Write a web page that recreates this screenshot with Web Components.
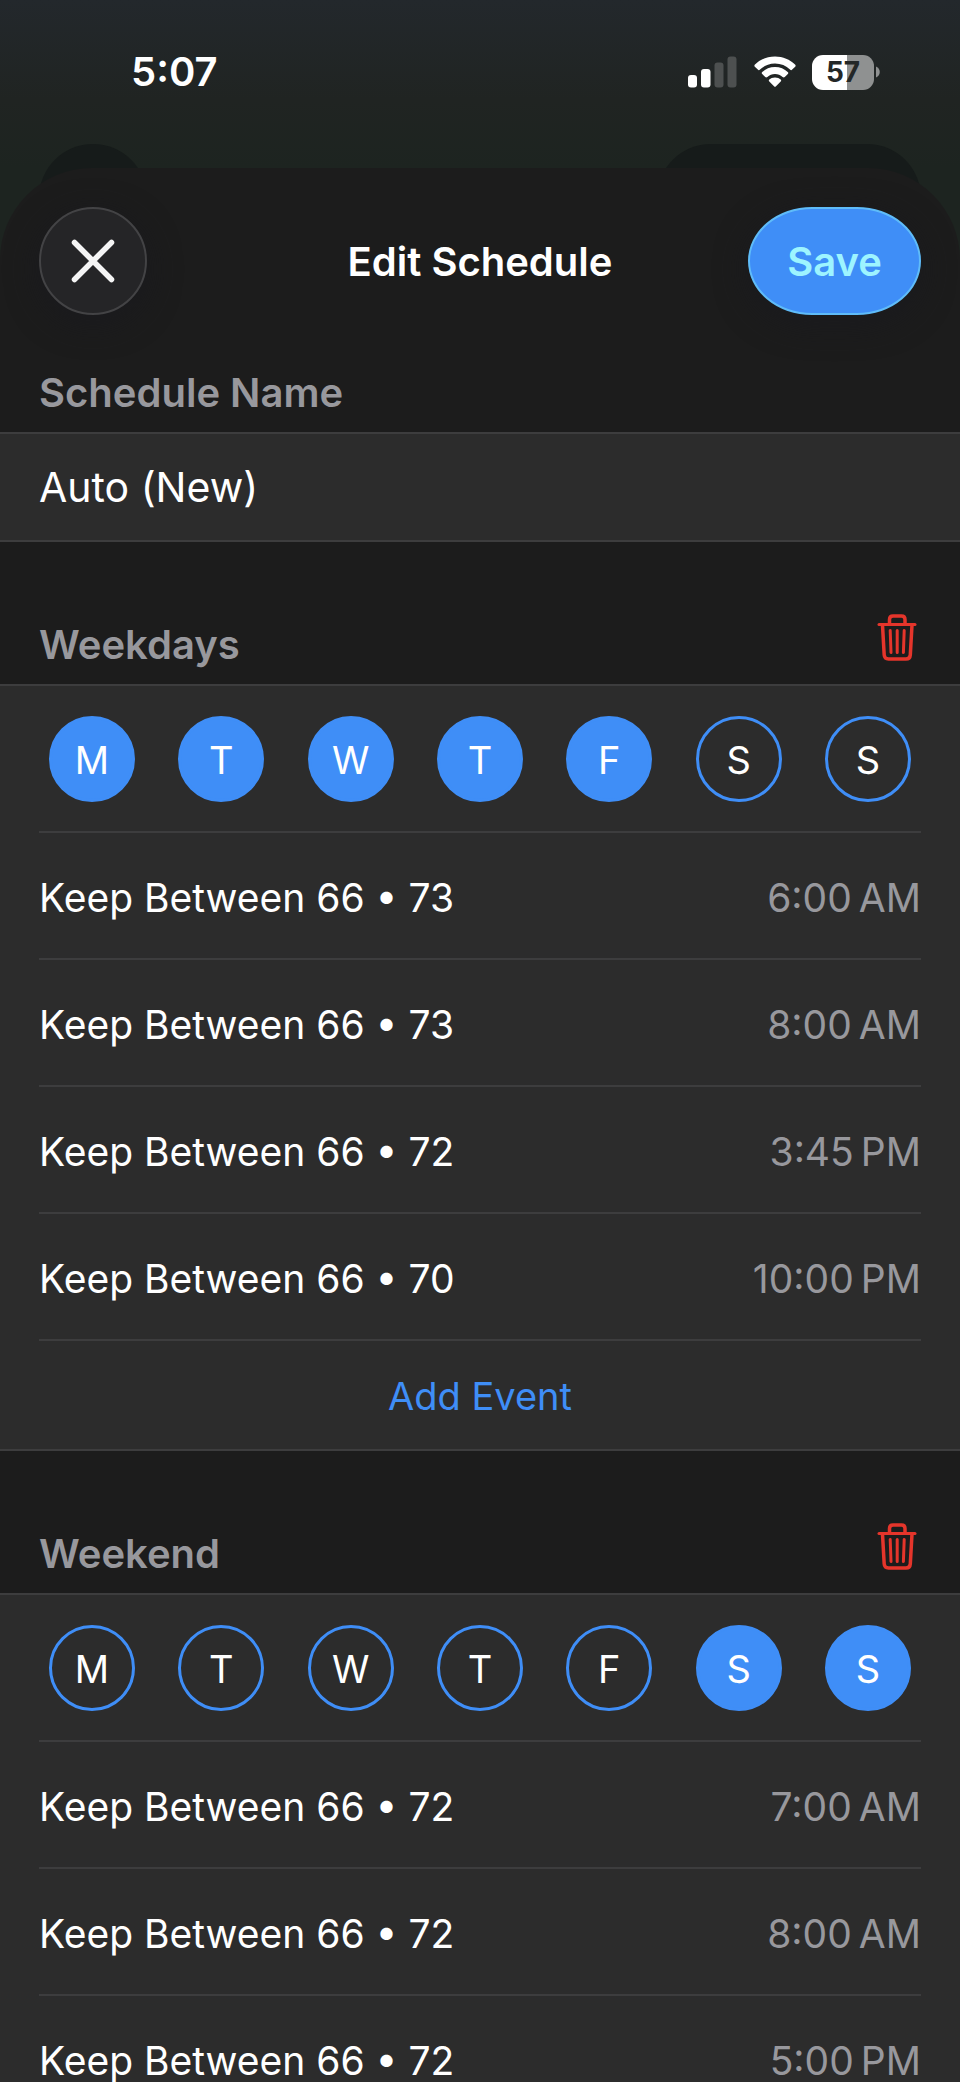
<!DOCTYPE html>
<html lang="en">
<head>
<meta charset="utf-8">
<meta name="viewport" content="width=device-width, initial-scale=1">
<title>Edit Schedule</title>
<style>
    :root {
        --accent: #3f8ef7;
        --sheet: #1c1c1c;
        --card: #2c2c2c;
        --line: #3d3d3e;
        --muted: #98989d;
        --gutter: 39px;
    }

    body {
        margin: 0;
        background: var(--sheet);
        color: #fff;
        font-family: Inter, "Liberation Sans", sans-serif;
        font-size: 40px;
        line-height: 48px;
    }
</style>
</head>
<body>
<schedule-app>
    <status-bar slot="status" time="5:07" battery="57"></status-bar>
    <sheet-header slot="header">Edit Schedule</sheet-header>
    <name-field label="Schedule Name" value="Auto (New)"></name-field>
    <day-group name="Weekdays" days="0,1,2,3,4">
        <event-row time="6:00 AM">Keep Between 66 • 73</event-row>
        <event-row time="8:00 AM">Keep Between 66 • 73</event-row>
        <event-row time="3:45 PM">Keep Between 66 • 72</event-row>
        <event-row time="10:00 PM">Keep Between 66 • 70</event-row>
    </day-group>
    <day-group name="Weekend" days="5,6">
        <event-row time="7:00 AM">Keep Between 66 • 72</event-row>
        <event-row time="8:00 AM">Keep Between 66 • 72</event-row>
        <event-row time="5:00 PM">Keep Between 66 • 72</event-row>
    </day-group>
</schedule-app>

<script>
const resetButton = `
    button {
        margin: 0;
        padding: 0;
        border: 0;
        background: none;
        color: inherit;
        font: inherit;
        cursor: pointer;
    }
`;

class ScheduleApp extends HTMLElement {
    constructor() {
        super();
        this.attachShadow({ mode: 'open' });
        this.shadowRoot.innerHTML = `
            <style>
                :host {
                    display: flex;
                    flex-direction: column;
                    height: 100vh;
                    overflow: hidden;
                    background: linear-gradient(#23282c, #202422 100px, #1d2420 168px, #1d2420);
                }

                /* toolbar of the page underneath, peeking out above the sheet */
                .behind {
                    display: flex;
                    flex: none;
                    justify-content: space-between;
                    height: 24px;
                    padding: 0 var(--gutter);

                    span {
                        width: 108px;
                        height: 108px;
                        border-radius: 54px;
                        background: #161b1a;
                    }

                    span + span {
                        width: 264px;
                    }
                }

                .sheet {
                    position: relative;
                    flex: 1;
                    min-height: 0;
                    overflow-y: auto;
                    scrollbar-width: none;
                    background: var(--sheet);
                    border-radius: 92px 92px 0 0;
                }
            </style>
            <slot name="status"></slot>
            <div class="behind"><span></span><span></span></div>
            <main class="sheet">
                <slot name="header"></slot>
                <slot></slot>
            </main>
        `;
    }
}

class StatusBar extends HTMLElement {
    constructor() {
        super();
        this.attachShadow({ mode: 'open' });
    }

    connectedCallback() {
        const time = this.getAttribute('time') || '';
        const battery = this.getAttribute('battery') || '';

        this.shadowRoot.innerHTML = `
            <style>
                :host {
                    display: flex;
                    flex: none;
                    align-items: center;
                    justify-content: space-between;
                    height: 144px;
                    padding: 0 80px 0 131px;
                    font-weight: 600;
                }

                .icons {
                    display: flex;
                    align-items: center;
                    gap: 16px;
                }

                svg {
                    display: block;
                }

                .battery {
                    display: flex;
                    align-items: center;
                    gap: 2px;
                }

                .level {
                    width: 62px;
                    border-radius: 11px;
                    background: linear-gradient(90deg, #fff ${battery}%, #8f9191 ${battery}%);
                    color: #232727;
                    font-size: 28px;
                    font-weight: 700;
                    line-height: 35px;
                    text-align: center;
                }
            </style>
            <span>${time}</span>
            <div class="icons">
                <svg width="50" height="32" viewBox="0 0 50 32" fill="#fff" aria-hidden="true">
                    <rect x="0" y="19" width="9" height="12.500" rx="3"/>
                    <rect x="13" y="13" width="9.500" height="18.500" rx="3"/>
                    <rect x="26.500" y="6.500" width="9" height="25" rx="3" fill="#4d5050"/>
                    <rect x="39.500" y="0.500" width="9" height="31" rx="3" fill="#4d5050"/>
                </svg>
                <svg width="42" height="32" viewBox="0 0 42 32" fill="#fff" aria-hidden="true">
                    <path d="M21 0.500C29 0.500 36 3.500 41 8.500C41.800 9.300 41.800 10 41.200 10.700L38.200 13.600C37.500 14.300 36.800 14.300 36 13.600C32 9.800 27 7.500 21 7.500C15 7.500 10 9.800 6 13.600C5.200 14.300 4.500 14.300 3.800 13.600L0.800 10.700C0.200 10 0.200 9.300 1 8.500C6 3.500 13 0.500 21 0.500Z"/>
                    <path d="M21 11C26 11 30.500 13 33.700 15.900C34.500 16.700 34.500 17.400 33.800 18.100L30.800 21C30.100 21.700 29.400 21.600 28.600 21C26.500 19.200 24 18 21 18C18 18 15.500 19.200 13.400 21C12.600 21.600 11.900 21.700 11.200 21L8.200 18.100C7.500 17.400 7.500 16.700 8.300 15.900C11.500 13 16 11 21 11Z"/>
                    <path d="M21 21.500C23.500 21.500 25.300 22.300 26.700 23.500C27.400 24.200 27.300 24.800 26.700 25.400L22 30.300C21.300 31 20.700 31 20 30.300L15.300 25.400C14.700 24.800 14.600 24.200 15.300 23.500C16.700 22.300 18.500 21.500 21 21.500Z"/>
                </svg>
                <div class="battery">
                    <div class="level">${battery}</div>
                    <svg width="4" height="12" viewBox="0 0 4 12" fill="#8f9191" aria-hidden="true">
                        <path d="M0 0.500C5 2.500 5 9.500 0 11.500Z"/>
                    </svg>
                </div>
            </div>
        `;
    }
}

class SheetHeader extends HTMLElement {
    constructor() {
        super();
        this.attachShadow({ mode: 'open' });
        this.shadowRoot.innerHTML = `
            <style>
                ${resetButton}

                :host {
                    display: grid;
                    grid-template-columns: 1fr auto 1fr;
                    align-items: center;
                    padding: 39px var(--gutter) 0;
                }

                h1 {
                    margin: 0;
                    padding-top: 2px;
                    font-size: inherit;
                    font-weight: 600;
                }

                .close {
                    display: grid;
                    place-items: center;
                    box-sizing: border-box;
                    width: 108px;
                    height: 108px;
                    border: 2px solid #434345;
                    border-radius: 50%;
                    background: #252527;
                    box-shadow: 0 8px 32px #1a1a1e;
                }

                .save {
                    justify-self: end;
                    box-sizing: border-box;
                    height: 108px;
                    padding: 2px 37px 0;
                    border: 2px solid #5fbcf9;
                    border-radius: 64px / 54px;
                    background: var(--accent);
                    box-shadow: 0 8px 32px #1a1a1e;
                    color: #9df4ff;
                    font-weight: 600;
                }
            </style>
            <button class="close" type="button" aria-label="Close">
                <svg width="44" height="44" viewBox="0 0 44 44" fill="none" stroke="#f5f5f5" stroke-width="5.500" stroke-linecap="round" aria-hidden="true">
                    <path d="M3.500 3.500L40.500 40.500M40.500 3.500L3.500 40.500"/>
                </svg>
            </button>
            <h1><slot></slot></h1>
            <button class="save" type="button">Save</button>
        `;
    }
}

class NameField extends HTMLElement {
    constructor() {
        super();
        this.attachShadow({ mode: 'open' });
    }

    connectedCallback() {
        this.shadowRoot.innerHTML = `
            <style>
                :host {
                    display: block;
                }

                label {
                    display: block;
                    padding: 54px var(--gutter) 15px;
                    color: var(--muted);
                    font-weight: 600;
                }

                input {
                    display: block;
                    box-sizing: border-box;
                    width: 100%;
                    height: 110px;
                    margin: 0;
                    padding: 0 var(--gutter);
                    border: solid var(--line);
                    border-width: 2px 0;
                    border-radius: 0;
                    outline: 0;
                    background: var(--card);
                    color: inherit;
                    font: inherit;
                    font-size: 41px;
                }
            </style>
            <label for="name">${this.getAttribute('label') || ''}</label>
            <input id="name" type="text" value="${this.getAttribute('value') || ''}">
        `;
    }
}

class DayGroup extends HTMLElement {
    constructor() {
        super();
        this.attachShadow({ mode: 'open' });
    }

    connectedCallback() {
        const name = this.getAttribute('name') || '';
        const selected = (this.getAttribute('days') || '').split(',').map(Number);
        const names = ['Monday', 'Tuesday', 'Wednesday', 'Thursday', 'Friday', 'Saturday', 'Sunday'];

        this.shadowRoot.innerHTML = `
            <style>
                ${resetButton}

                :host {
                    display: block;
                }

                header {
                    display: flex;
                    align-items: flex-end;
                    justify-content: space-between;
                    padding: 79px var(--gutter) 15px;
                }

                h2 {
                    margin: 0;
                    color: var(--muted);
                    font-size: inherit;
                    font-weight: 600;
                }

                .delete {
                    padding: 0 4px 8px;
                    margin-top: -8px;
                }

                svg {
                    display: block;
                }

                .card {
                    padding: 0 var(--gutter);
                    border: solid var(--line);
                    border-width: 2px 0;
                    background: var(--card);
                }

                .days {
                    display: flex;
                    justify-content: space-between;
                    padding: 30px 10px 29px;
                    border-bottom: 2px solid var(--line);

                    button {
                        box-sizing: border-box;
                        width: 86px;
                        height: 86px;
                        padding-top: 2px;
                        border: 3px solid var(--accent);
                        border-radius: 50%;
                        font-size: 38px;

                        &[aria-pressed="true"] {
                            background: var(--accent);
                        }
                    }
                }

                .add {
                    display: block;
                    width: 100%;
                    height: 108px;
                    padding-top: 2px;
                    color: var(--accent);
                    font-size: 38px;
                }
            </style>
            <header>
                <h2>${name}</h2>
                <button class="delete" type="button" aria-label="Delete ${name}">
                    <svg width="40" height="48" viewBox="0 0 40 48" fill="none" stroke="#e5352b" stroke-width="3.500" stroke-linecap="round" stroke-linejoin="round" aria-hidden="true">
                        <path d="M2 11.500H38" stroke-width="3"/>
                        <path d="M12.500 11V6.500Q12.500 3 16 3H24.500Q28 3 28 6.500V11"/>
                        <path d="M5.500 12L7.200 42Q7.500 46 11.500 46H29Q33 46 33.300 42L35 12"/>
                        <path d="M13.200 17.500L14 39.500M20.200 17.500V39.500M27.200 17.500L26.400 39.500" stroke-width="3"/>
                    </svg>
                </button>
            </header>
            <div class="card">
                <div class="days" role="group" aria-label="${name}">
                    ${names.map((day, i) => `<button type="button" aria-label="${day}" aria-pressed="${selected.includes(i)}">${day[0]}</button>`).join('')}
                </div>
                <slot></slot>
                <button class="add" type="button">Add Event</button>
            </div>
        `;

        this.shadowRoot.querySelectorAll('.days button').forEach((button) => {
            button.addEventListener('click', () => {
                button.setAttribute('aria-pressed', button.getAttribute('aria-pressed') !== 'true');
            });
        });
    }
}

class EventRow extends HTMLElement {
    constructor() {
        super();
        this.attachShadow({ mode: 'open' });
    }

    connectedCallback() {
        // narrow no-break space between the clock and AM/PM
        const time = (this.getAttribute('time') || '').replace(' ', '\u202f');

        this.shadowRoot.innerHTML = `
            <style>
                ${resetButton}

                :host {
                    display: block;
                    border-bottom: 2px solid var(--line);
                    font-size: 39px;
                }

                button {
                    display: flex;
                    align-items: center;
                    justify-content: space-between;
                    box-sizing: border-box;
                    width: 100%;
                    height: 125px;
                    padding-top: 4px;
                }

                time {
                    color: var(--muted);
                }
            </style>
            <button type="button">
                <span><slot></slot></span>
                <time>${time}</time>
            </button>
        `;
    }
}

customElements.define('schedule-app', ScheduleApp);
customElements.define('status-bar', StatusBar);
customElements.define('sheet-header', SheetHeader);
customElements.define('name-field', NameField);
customElements.define('day-group', DayGroup);
customElements.define('event-row', EventRow);
</script>
</body>
</html>
